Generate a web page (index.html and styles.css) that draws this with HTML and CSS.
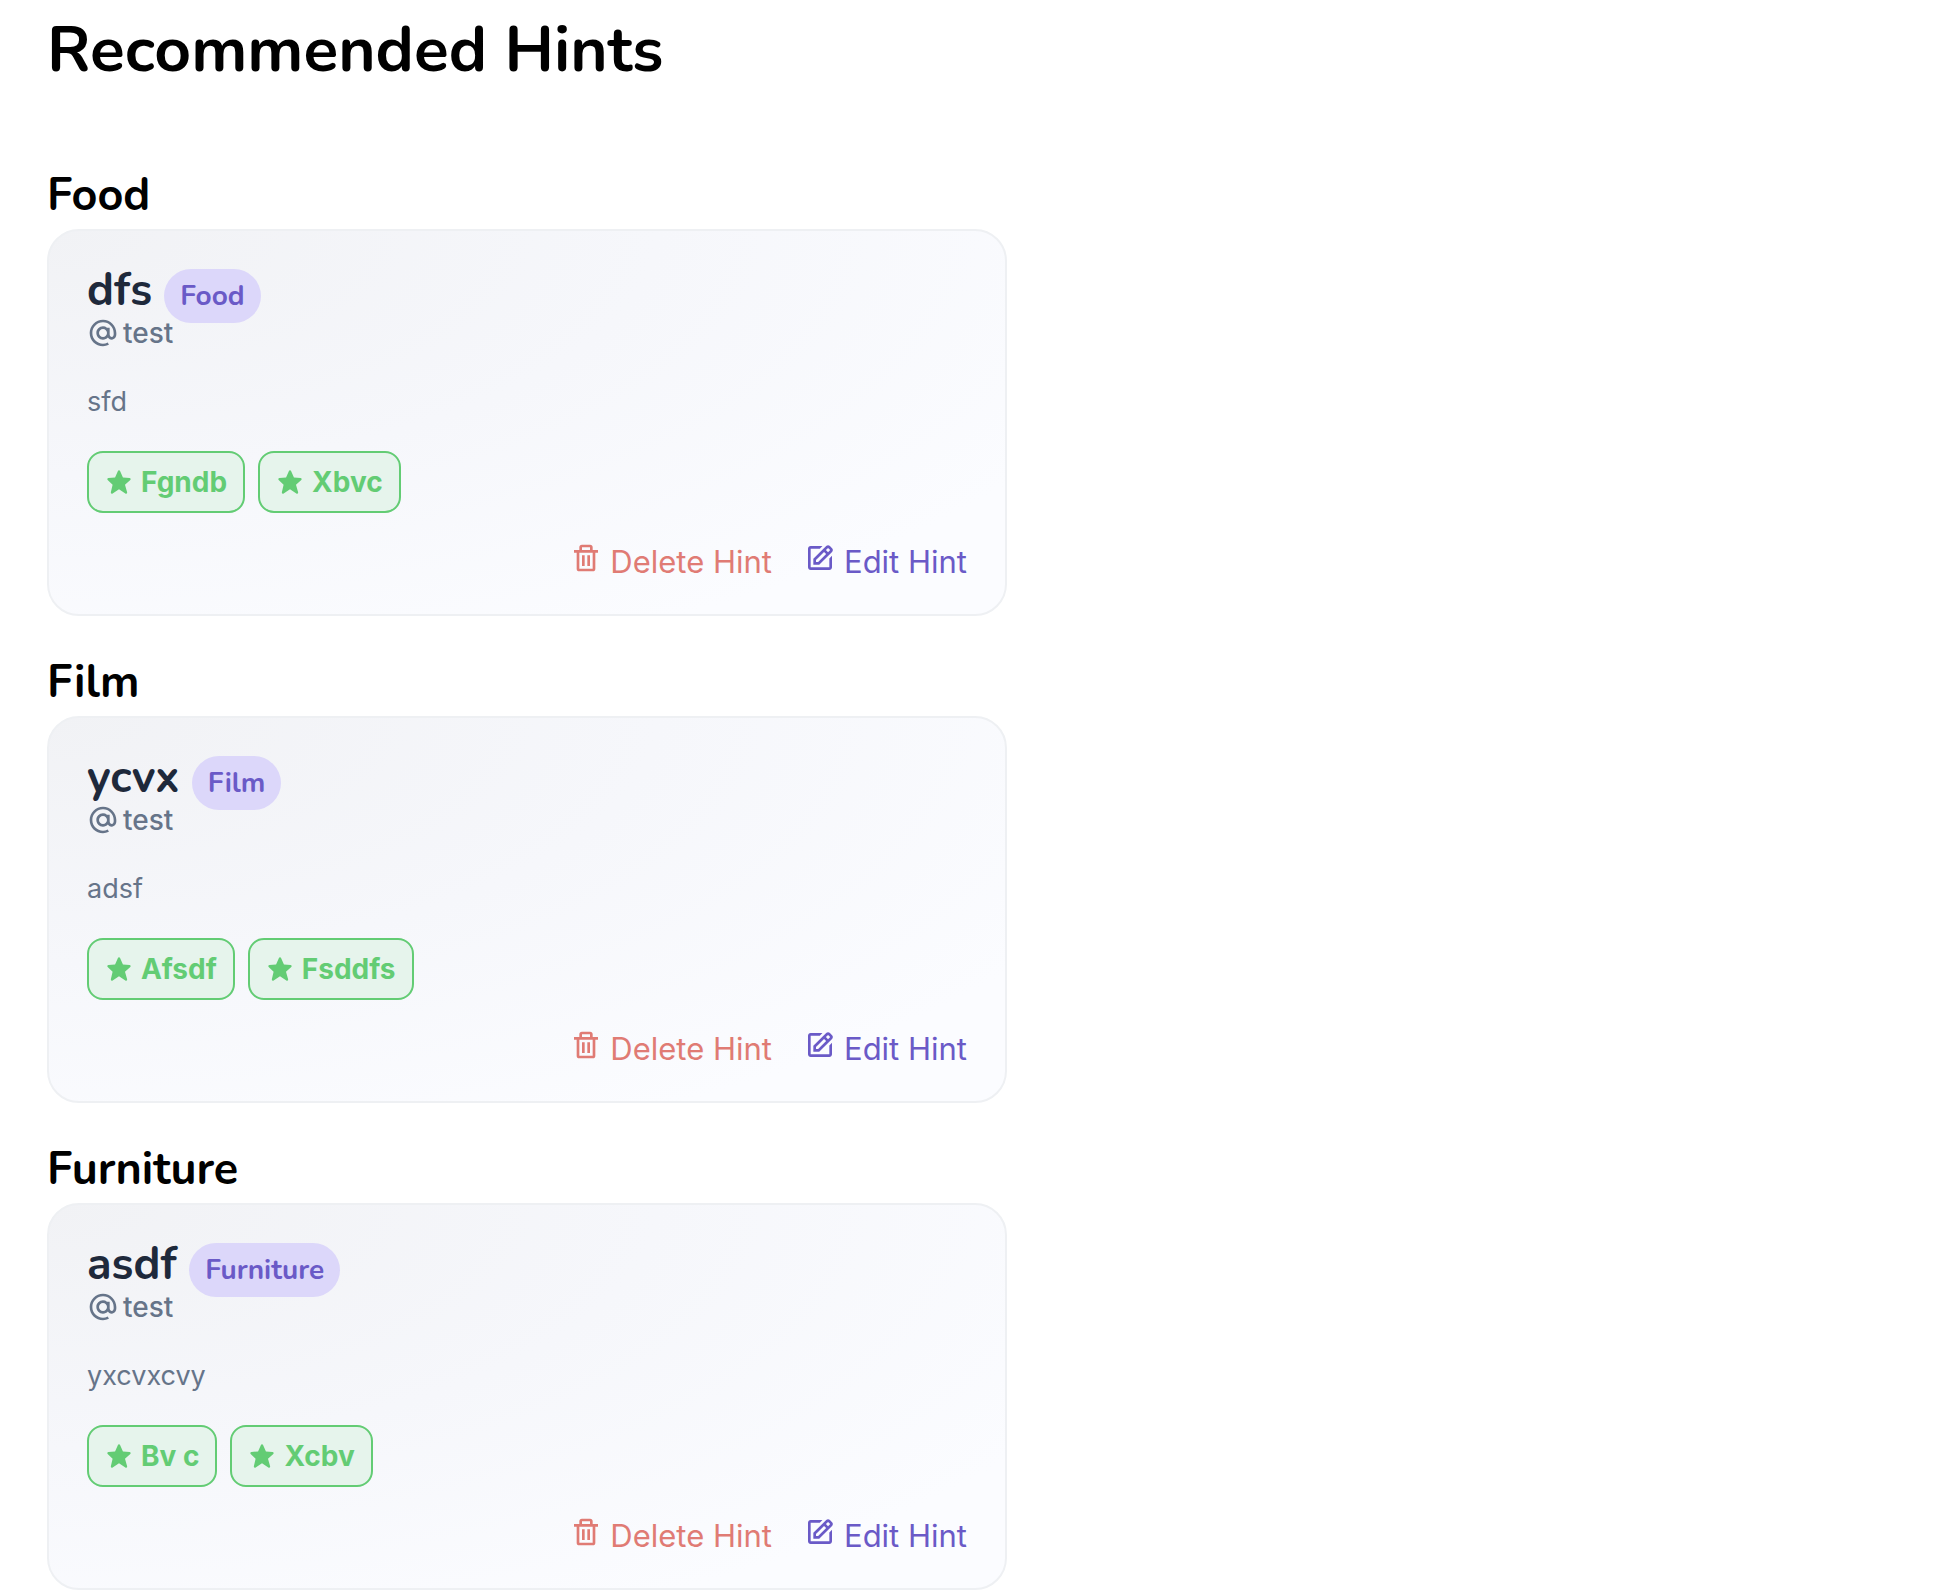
FILE: index.html
```html
<!DOCTYPE html>
<html lang="en">
<head>
<meta charset="utf-8">
<title>Recommended Hints</title>
<link rel="stylesheet" href="styles.css">
</head>
<body>
<svg class="sprite" aria-hidden="true">
  <symbol id="at" viewBox="0 0 24 24"><path d="M12 2C6.486 2 2 6.486 2 12s4.486 10 10 10c1.466 0 2.961-.371 4.442-1.104l-.885-1.793C14.353 19.698 13.156 20 12 20c-4.411 0-8-3.589-8-8s3.589-8 8-8 8 3.589 8 8v1c0 .692-.313 2-1.5 2-1.396 0-1.494-1.819-1.5-2V8h-2v.025A4.954 4.954 0 0 0 12 7c-2.757 0-5 2.243-5 5s2.243 5 5 5c1.45 0 2.748-.631 3.662-1.621.524.89 1.408 1.621 2.838 1.621 2.273 0 3.5-2.061 3.5-4v-1c0-5.514-4.486-10-10-10zm0 13c-1.654 0-3-1.346-3-3s1.346-3 3-3 3 1.346 3 3-1.346 3-3 3z"/></symbol>
  <symbol id="star" viewBox="0 0 24 24"><path d="M21.947 9.179a1.001 1.001 0 0 0-.868-.676l-5.701-.453-2.467-5.461a.998.998 0 0 0-1.822-.001L8.622 8.05l-5.701.453a1 1 0 0 0-.619 1.713l4.213 4.107-1.49 6.452a1 1 0 0 0 1.53 1.057L12 18.202l5.445 3.63a1.001 1.001 0 0 0 1.517-1.106l-1.829-6.4 4.536-4.082c.297-.268.406-.686.278-1.065z"/></symbol>
  <symbol id="trash" viewBox="0 0 24 24"><path d="M5 20a2 2 0 0 0 2 2h10a2 2 0 0 0 2-2V8h2V6h-4V4a2 2 0 0 0-2-2H9a2 2 0 0 0-2 2v2H3v2h2zM9 4h6v2H9zM8 8h9v12H7V8z"/><path d="M9 10h2v8H9zm4 0h2v8h-2z"/></symbol>
  <symbol id="edit" viewBox="0 0 24 24"><path d="m7 17.013 4.413-.015 9.632-9.54c.378-.378.586-.88.586-1.414s-.208-1.036-.586-1.414l-1.586-1.586c-.756-.756-2.075-.752-2.825-.003L7 12.583v4.43zM18.045 4.458l1.589 1.583-1.597 1.582-1.586-1.585 1.594-1.58zM9 13.417l6.03-5.973 1.586 1.586-6.029 5.971L9 15.006v-1.589z"/><path d="M5 21h14c1.103 0 2-.897 2-2v-8.668l-2 2V19H8.158c-.026 0-.053.01-.079.01-.033 0-.066-.009-.1-.01H5V5h6.847l2-2H5c-1.103 0-2 .897-2 2v14c0 1.103.897 2 2 2z"/></symbol>
</svg>
<main class="page">
  <h1 class="page-title">Recommended Hints</h1>

  <section class="group">
    <h2 class="group-title">Food</h2>
    <article class="card">
      <h3 class="card-title">dfs <span class="badge">Food</span></h3>
      <p class="author"><svg class="icon"><use href="#at"/></svg>test</p>
      <p class="description">sfd</p>
      <ul class="tags">
        <li class="tag"><svg class="icon-small"><use href="#star"/></svg>Fgndb</li>
        <li class="tag"><svg class="icon-small"><use href="#star"/></svg>Xbvc</li>
      </ul>
      <div class="actions">
        <button class="action action-delete" type="button"><svg class="icon"><use href="#trash"/></svg>Delete Hint</button>
        <button class="action action-edit" type="button"><svg class="icon"><use href="#edit"/></svg>Edit Hint</button>
      </div>
    </article>
  </section>

  <section class="group">
    <h2 class="group-title">Film</h2>
    <article class="card">
      <h3 class="card-title">ycvx <span class="badge">Film</span></h3>
      <p class="author"><svg class="icon"><use href="#at"/></svg>test</p>
      <p class="description">adsf</p>
      <ul class="tags">
        <li class="tag"><svg class="icon-small"><use href="#star"/></svg>Afsdf</li>
        <li class="tag"><svg class="icon-small"><use href="#star"/></svg>Fsddfs</li>
      </ul>
      <div class="actions">
        <button class="action action-delete" type="button"><svg class="icon"><use href="#trash"/></svg>Delete Hint</button>
        <button class="action action-edit" type="button"><svg class="icon"><use href="#edit"/></svg>Edit Hint</button>
      </div>
    </article>
  </section>

  <section class="group">
    <h2 class="group-title">Furniture</h2>
    <article class="card">
      <h3 class="card-title">asdf <span class="badge">Furniture</span></h3>
      <p class="author"><svg class="icon"><use href="#at"/></svg>test</p>
      <p class="description">yxcvxcvy</p>
      <ul class="tags">
        <li class="tag"><svg class="icon-small"><use href="#star"/></svg>Bv c</li>
        <li class="tag"><svg class="icon-small"><use href="#star"/></svg>Xcbv</li>
      </ul>
      <div class="actions">
        <button class="action action-delete" type="button"><svg class="icon"><use href="#trash"/></svg>Delete Hint</button>
        <button class="action action-edit" type="button"><svg class="icon"><use href="#edit"/></svg>Edit Hint</button>
      </div>
    </article>
  </section>
</main>
</body>
</html>
```
FILE: styles.css
```css
* {
  box-sizing: border-box;
}

body,
h1,
h2,
h3,
p,
ul {
  margin: 0;
  padding: 0;
}

body {
  background: #fff;
  color: #000;
  font-family: Inter, "Liberation Sans", sans-serif;
  font-size: 28px;
  line-height: 40px;
}

h1,
h2,
h3 {
  font-family: Nunito, "Open Sans", sans-serif;
  font-weight: 700;
}

.sprite {
  display: none;
}

.page {
  padding: 10px 47px 0;
}

.page-title {
  margin-bottom: 82px;
  font-size: 64px;
  line-height: 80px;
}

.group + .group {
  margin-top: 43px;
}

.group-title {
  padding-bottom: 9px;
  font-size: 45px;
  line-height: 48px;
}

.card {
  max-width: 960px;
  padding: 38px 38px 32px;
  border: 2px solid #eef0f3;
  border-radius: 32px;
  background: radial-gradient(ellipse farthest-corner at top left, #f1f2f5, #f6f7fb 45%, #fbfcff 85%);
}

.card-title {
  color: #1e293b;
  font-size: 45px;
  line-height: 44px;
}

.badge {
  padding: 8px 16px;
  border-radius: 28px;
  background: #dcd7fa;
  color: #6a5ac7;
  font-size: 28px;
  line-height: 28px;
}

.author {
  display: flex;
  align-items: center;
  gap: 4px;
  color: #667489;
  font-weight: 500;
}

.description {
  margin-top: 29px;
  color: #667489;
  font-size: 27px;
}

.tags {
  display: flex;
  flex-wrap: wrap;
  gap: 13px;
  margin-top: 29px;
  list-style: none;
}

.tag {
  display: flex;
  align-items: center;
  gap: 8px;
  padding: 9px 16px;
  border: 2px solid #63cc74;
  border-radius: 16px;
  background: #e6f4ec;
  color: #63cc74;
  font-weight: 700;
}

.actions {
  display: flex;
  justify-content: flex-end;
  gap: 32px;
  margin-top: 29px;
}

.action {
  display: flex;
  align-items: flex-start;
  gap: 8px;
  padding: 0;
  border: 0;
  background: none;
  font: inherit;
  font-size: 31px;
  line-height: 40px;
  cursor: pointer;
}

.action-delete {
  color: #e07b74;
}

.action-edit {
  color: #6a5ac7;
}

.icon,
.icon-small {
  flex: none;
  fill: currentColor;
}

.icon {
  width: 32px;
  height: 32px;
}

.icon-small {
  width: 28px;
  height: 28px;
}
```
